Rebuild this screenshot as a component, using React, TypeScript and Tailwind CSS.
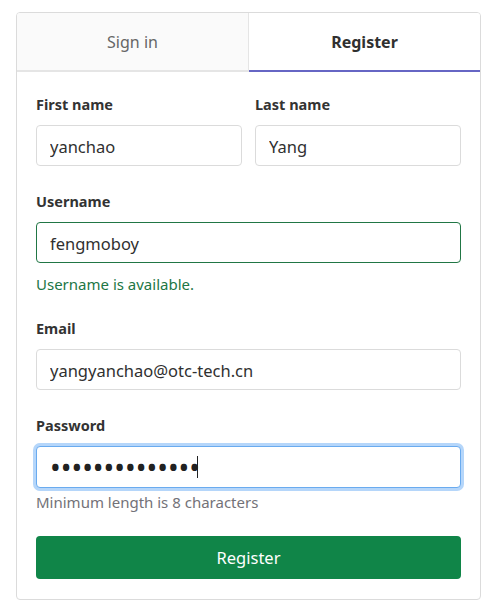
import { useState } from "react";

const inputCls =
  "block h-[41px] w-full rounded-[4px] border bg-white px-[13px] pt-[2px] text-[16.5px] text-[#303030] outline-none";

function Label({ children }: { children: React.ReactNode }) {
  return <label className="mb-[11px] block h-[20px] text-[14.5px] font-bold leading-[20px] text-[#333]">{children}</label>;
}

export default function App() {
  const [tab, setTab] = useState<"signin" | "register">("register");
  const [form, setForm] = useState({
    first: "yanchao",
    last: "Yang",
    username: "fengmoboy",
    email: "yangyanchao@otc-tech.cn",
    password: "12345678901234",
  });

  const onChange = (e: React.ChangeEvent<HTMLInputElement>) => {
    setForm({ ...form, [e.target.name]: e.target.value });
  };

  return (
    <div className="min-h-screen bg-white pt-[12px]" style={{ fontFamily: '"Noto Sans", "Open Sans", sans-serif' }}>
      <div className="ml-[16px] w-[465px] overflow-hidden rounded-[4px] border border-[#dbdbdb]">
        {/* Tabs */}
        <div className="flex h-[59px]">
          <button
            onClick={() => setTab("signin")}
            className={`flex-1 border-b-2 border-r border-r-[#e5e5e5] text-[16px] ${tab === "signin" ? "border-b-[#6666c4] bg-white font-bold text-[#303030]" : "border-b-[#e5e5e5] bg-[#fafafa] text-[#666]"}`}
          >
            Sign in
          </button>
          <button
            onClick={() => setTab("register")}
            className={`flex-1 border-b-2 text-[16px] ${tab === "register" ? "border-b-[#6666c4] bg-white font-bold text-[#303030]" : "border-b-[#e5e5e5] bg-[#fafafa] text-[#666]"}`}
          >
            Register
          </button>
        </div>

        <div className="px-[19px] pb-[20px] pt-[22px]">
          <div className="grid grid-cols-2 gap-[13px]">
            <div>
              <Label>First name</Label>
              <input name="first" value={form.first} onChange={onChange} className={`${inputCls} border-[#dbdbdb]`} />
            </div>
            <div>
              <Label>Last name</Label>
              <input name="last" value={form.last} onChange={onChange} className={`${inputCls} border-[#dbdbdb]`} />
            </div>
          </div>

          <div className="mt-[25px]">
            <Label>Username</Label>
            <input name="username" value={form.username} onChange={onChange} className={`${inputCls} border-[#217645]`} />
            <p className="mt-[11px] h-[20px] text-[15px] leading-[20px] text-[#217645]">Username is available.</p>
          </div>

          <div className="mt-[24px]">
            <Label>Email</Label>
            <input name="email" type="email" value={form.email} onChange={onChange} className={`${inputCls} border-[#dbdbdb]`} />
          </div>

          <div className="mt-[25px]">
            <Label>Password</Label>
            <div className="relative">
              <input
                name="password"
                type="password"
                value={form.password}
                onChange={onChange}
                className="block h-[42px] w-full rounded-[4px] border border-[#6aabef] bg-white px-[13px] text-[28.5px] text-[#222] shadow-[0_0_0_3px_#b5d6fa] outline-none"
              />
              <span className="absolute left-[161px] top-[10px] h-[22px] w-px bg-[#222]" />
            </div>
            <p className="mt-[5px] h-[18px] text-[15px] leading-[18px] text-[#737278]">Minimum length is 8 characters</p>
          </div>

          <button className="mt-[25px] h-[43px] w-full rounded-[4px] bg-[#108548] pt-[2px] text-[16.5px] text-white">Register</button>
        </div>
      </div>
    </div>
  );
}
